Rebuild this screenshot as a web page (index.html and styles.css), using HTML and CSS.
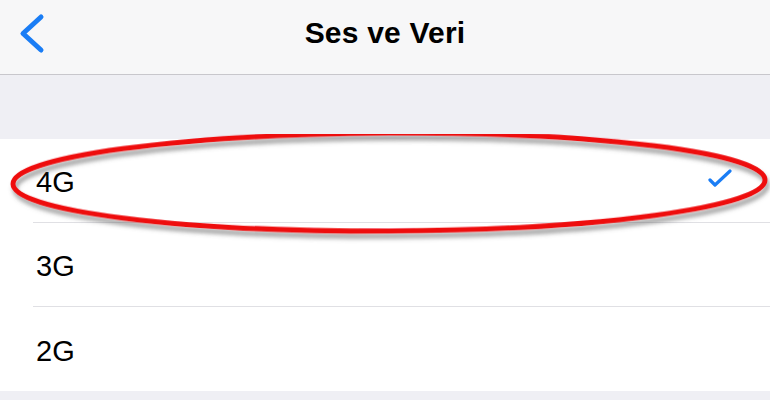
FILE: index.html
```html
<!DOCTYPE html>
<html>
<head>
<meta name="viewport" content="width=device-width, initial-scale=1">
<link rel="stylesheet" href="styles.css">
</head>
<body>

<div class="navbar">
  <button class="back" aria-label="Geri">
    <svg width="30" height="44" viewBox="0 0 30 44">
      <polyline points="24,4 6,20.5 24,37" fill="none" stroke="#1a7df5" stroke-width="5" stroke-linecap="round" stroke-linejoin="round"/>
    </svg>
  </button>
  <h1 class="title">Ses ve Veri</h1>
</div>

<div class="section-gap"></div>

<div class="list">
  <div class="row">
    <span class="label">4G</span>
    <svg class="check" width="26" height="20" viewBox="0 0 26 20">
      <polyline points="2,11 7,16 22,2" fill="none" stroke="#1a7df5" stroke-width="3.2" stroke-linecap="round" stroke-linejoin="round"/>
    </svg>
  </div>
  <div class="row">
    <span class="label">3G</span>
  </div>
  <div class="row">
    <span class="label">2G</span>
  </div>

  <!-- red highlight drawn over the selected row -->
  <svg class="mark" width="770" height="140" viewBox="0 0 770 140">
    <defs>
      <filter id="shade" x="-5%" y="-20%" width="110%" height="140%">
        <feDropShadow dx="2" dy="5" stdDeviation="2" flood-color="#555" flood-opacity="0.55"/>
      </filter>
    </defs>
    <ellipse cx="389" cy="48" rx="376" ry="49" fill="none" stroke="#ee0a10" stroke-width="5" filter="url(#shade)" transform="rotate(-0.3 389 48)"/>
  </svg>
</div>

<div class="section-end"></div>

</body>
</html>
```

FILE: styles.css
```css
body {
  margin: 0;
  width: 770px;
  height: 400px;
  overflow: hidden;
  background-color: #efeff4;
  font-family: "Liberation Sans", Arial, sans-serif;
  color: #000;
}

/* top navigation bar */
.navbar {
  position: relative;
  height: 74px;
  background-color: #f7f7f8;
  border-bottom: 1px solid #c8c7cc;
  display: flex;
  align-items: center;
  justify-content: center;
}

.navbar .back {
  position: absolute;
  left: 17px;
  top: 13px;
  padding: 0;
  border: none;
  background: none;
}

.navbar .back svg {
  display: block;
}

.title {
  margin: 0 0 8px 0;
  font-size: 30px;
  font-weight: 700;
  letter-spacing: 0.2px;
}

.section-gap {
  height: 64px;
  background-color: #efeff4;
}

/* list of network options */
.list {
  position: relative;
  background-color: #fff;
}

.row {
  height: 84px;
  margin-left: 33px;
  padding-right: 36px;
  display: flex;
  align-items: center;
  justify-content: space-between;
  border-bottom: 1px solid #e0e0e4;
  box-sizing: border-box;
}

.row:last-of-type {
  border-bottom: none;
}

.label {
  padding-left: 3px;
  padding-top: 4px;
  font-size: 29px;
}

.check {
  margin-top: -4px;
}

.mark {
  position: absolute;
  left: 0;
  top: -5px;
  pointer-events: none;
}

.section-end {
  height: 20px;
  background-color: #efeff4;
}
```
